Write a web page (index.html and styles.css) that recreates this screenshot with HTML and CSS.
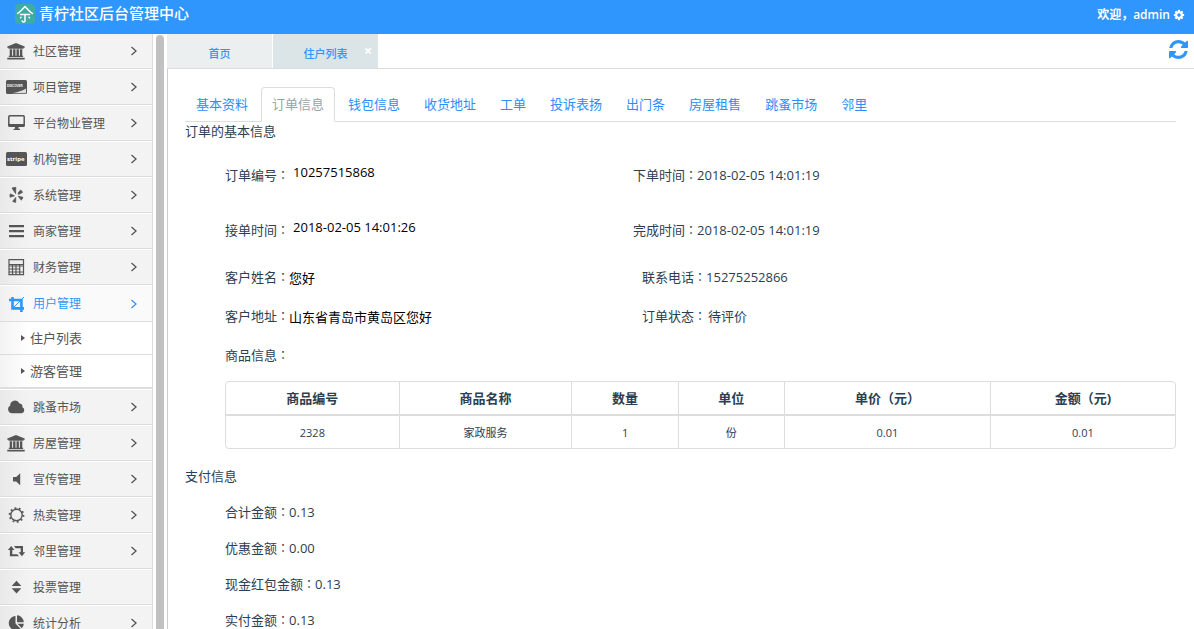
FILE: index.html
```html
<!DOCTYPE html>
<html lang="zh-CN">
<head>
<meta charset="utf-8">
<title>青柠社区后台管理中心</title>
<link rel="stylesheet" href="styles.css">
</head>
<body>
<svg class="defs" aria-hidden="true">
  <symbol id="chevron" viewBox="0 0 8 10"><path d="M1.5 1 6 5 1.5 9" fill="none" stroke="currentColor" stroke-width="1.3"/></symbol>
  <symbol id="caret" viewBox="0 0 4 6"><path d="M0 0 4 3 0 6z" fill="currentColor"/></symbol>
  <symbol id="bank" viewBox="0 0 21 18"><path fill="currentColor" d="M10 1 18.7 4.6v1.2h-1.2v.9h-15v-.9H1.3V4.6zM3.7 7.2h2.4v6.6h1V7.2h2.4v6.6h1V7.2h2.4v6.6h1V7.2h2.4v6.6h.8v1.2H2.8v-1.2h.9zM1.3 15.8h17.4V17.6H1.3z"/></symbol>
</svg>
<header class="topbar">
  <a class="brand" href="#">
    <svg class="logo" viewBox="0 0 20 20"><rect width="20" height="20" rx="4" fill="#3faba6"/><path d="M2.5 9.5C5 8.500 7.500 5 10 2.500c2.500 2.500 5 6 7.500 7M5.500 10.500h9M10 10.500v6.200c0 1.600-2.600 1.800-2.800.2M6 13.200l-.5.5M14 13.200l.5.5" fill="none" stroke="#fff" stroke-width="1.500" stroke-linecap="round" stroke-linejoin="round"/></svg>
    <h1>青柠社区后台管理中心</h1>
  </a>
  <a class="user" href="#">欢迎，admin
    <svg class="cog" viewBox="0 0 1792 1792"><path fill="currentColor" d="M1152 896q0-106-75-181t-181-75-181 75-75 181 75 181 181 75 181-75 75-181zm512-109v222q0 12-8 23t-20 13l-185 28q-19 54-39 91 35 50 107 138 10 12 10 25t-9 23q-27 37-99 108t-94 71q-12 0-26-9l-138-108q-44 23-91 38-16 136-29 186-7 28-36 28h-222q-14 0-24.500-8.500t-11.500-21.500l-28-184q-49-16-90-37l-141 107q-10 9-25 9-14 0-25-11-126-114-165-168-7-10-7-23 0-12 8-23 15-21 51-66.500t54-70.500q-27-50-41-99l-183-27q-13-2-21-12.500t-8-23.500v-222q0-12 8-23t19-13l186-28q14-46 39-92-40-57-107-138-10-12-10-24 0-10 9-23 26-36 98.500-107.500t94.500-71.500q13 0 26 10l138 107q44-23 91-38 16-136 29-186 7-28 36-28h222q14 0 24.500 8.500t11.500 21.500l28 184q49 16 90 37l142-107q9-9 24-9 13 0 25 10 129 119 165 170 7 8 7 22 0 12-8 23-15 21-51 66.500t-54 70.500q26 50 41 98l183 28q13 2 21 12.500t8 23.500z"/></svg>
  </a>
</header>
<div class="frame">
  <nav class="sidebar">
    <a class="item" href="#"><svg class="icon"><use href="#bank"/></svg><span>社区管理</span><svg class="chev"><use href="#chevron"/></svg></a>
    <a class="item" href="#"><svg class="icon" viewBox="0 0 21 18"><rect y="2" width="21" height="14" rx="1.500" fill="currentColor"/><path d="M20 10.500C17 12.500 11 14.500 5.500 15.200H19.500q.5 0 .5-.5z" fill="#ddd"/><text class="tiny" x="1" y="9">DISCOVER</text></svg><span>项目管理</span><svg class="chev"><use href="#chevron"/></svg></a>
    <a class="item" href="#"><svg class="icon" viewBox="0 0 21 18"><rect x="2.800" y="1.800" width="15.400" height="10.400" rx="1" fill="none" stroke="currentColor" stroke-width="1.500"/><path d="M2.500 10h16v2.500h-16zM9 12.500h3.500v2.300H14V16H7.500v-1.200H9z" fill="currentColor"/></svg><span>平台物业管理</span><svg class="chev"><use href="#chevron"/></svg></a>
    <a class="item" href="#"><svg class="icon" viewBox="0 0 21 18"><rect y="2" width="21" height="14" rx="1.500" fill="currentColor"/><text class="stripe" x="1" y="11">stripe</text></svg><span>机构管理</span><svg class="chev"><use href="#chevron"/></svg></a>
    <a class="item" href="#"><svg class="icon" viewBox="0 0 21 18"><path fill="currentColor" stroke="currentColor" stroke-width=".8" stroke-linejoin="round" d="M6 2 9.800 1.300 9.600 7.600zM12 7.200 14.600 3.900 16.600 6.300 12.700 8.400zM12.300 10.300 17 11.300 15.300 14.200zM9.700 11.500V16.400L6.700 15.400zM8.400 9.800 4.200 7.900 4 11.200z"/></svg><span>系统管理</span><svg class="chev"><use href="#chevron"/></svg></a>
    <a class="item" href="#"><svg class="icon" viewBox="0 0 21 18"><path fill="currentColor" d="M3 3h15v2.200H3zM3 8h15v2.200H3zM3 13h15v2.200H3z"/></svg><span>商家管理</span><svg class="chev"><use href="#chevron"/></svg></a>
    <a class="item" href="#"><svg class="icon" viewBox="0 0 21 18"><path fill="none" stroke="currentColor" stroke-width="1.200" d="M3 1.600h14.500v15H3zM3 6.500h14.500M3 8h14.500M3 11h11M3 14h14.500M6.500 7v9.500M10 7v9.500M13.700 7v9.500"/></svg><span>财务管理</span><svg class="chev"><use href="#chevron"/></svg></a>
    <a class="item active" href="#"><svg class="icon" viewBox="0 0 21 18"><path fill="none" stroke="currentColor" stroke-width="2.600" d="M6.500 2v11.400H18M3 5h12.400v12"/><path d="M6.500 13.500 18 2" stroke="currentColor"/></svg><span>用户管理</span><svg class="chev"><use href="#chevron"/></svg></a>
    <div class="submenu">
      <a href="#"><svg class="caret"><use href="#caret"/></svg>住户列表</a>
      <a href="#"><svg class="caret"><use href="#caret"/></svg>游客管理</a>
    </div>
    <a class="item" href="#"><svg class="icon" viewBox="0 0 21 18"><path fill="currentColor" d="M6 15.200a4 4 0 0 1-1.800-7.500 4.800 4.800 0 0 1 9.200-2.200 3 3 0 0 1 3 3.700 3.200 3.200 0 0 1-.5 6z"/></svg><span>跳蚤市场</span><svg class="chev"><use href="#chevron"/></svg></a>
    <a class="item" href="#"><svg class="icon"><use href="#bank"/></svg><span>房屋管理</span><svg class="chev"><use href="#chevron"/></svg></a>
    <a class="item" href="#"><svg class="icon" viewBox="0 0 21 18"><path fill="currentColor" d="M7 7h3.200l4-3.800v12L10.200 11.500H7z"/></svg><span>宣传管理</span><svg class="chev"><use href="#chevron"/></svg></a>
    <a class="item" href="#"><svg class="icon" viewBox="0 0 21 18"><circle cx="10.500" cy="9" r="5.700" fill="none" stroke="currentColor" stroke-width="1.400"/><circle cx="10.500" cy="9" r="7" fill="none" stroke="currentColor" stroke-width="1.700" stroke-dasharray="1.800 2.600"/></svg><span>热卖管理</span><svg class="chev"><use href="#chevron"/></svg></a>
    <a class="item" href="#"><svg class="icon" viewBox="0 0 21 18"><path fill="currentColor" d="M5.200 4 8.500 8H6.300v4.200h5L13 14.300H3.900V8H1.900zM8 4h9v6.200h2.200L15.900 14.300 12.500 10.200h2.200V6.200h-5z"/></svg><span>邻里管理</span><svg class="chev"><use href="#chevron"/></svg></a>
    <a class="item" href="#"><svg class="icon" viewBox="0 0 21 18"><path fill="currentColor" d="M10.500 2.800 15.300 8H5.700zM5.700 10.200h9.600L10.500 15.400z"/></svg><span>投票管理</span></a>
    <a class="item" href="#"><svg class="icon" viewBox="0 0 21 18"><path fill="currentColor" d="M9.500 2v7.500l5 5.300A7.200 7.200 0 1 1 9.500 2zM11 1.300a7 7 0 0 1 6.700 7H11zM11.500 9.700h6.300a7 7 0 0 1-2 4.500z"/></svg><span>统计分析</span><svg class="chev"><use href="#chevron"/></svg></a>
  </nav>
  <div class="scroll"></div>
  <main class="main">
    <div class="pages">
      <a class="page" href="#">首页</a>
      <a class="page current" href="#">住户列表<span class="close">×</span></a>
      <button class="refresh" type="button" aria-label="刷新"><svg viewBox="128 128 1536 1536"><path fill="currentColor" d="M1639 1056q0 5-1 7-64 268-268 434.500t-478 166.500q-146 0-282.500-55t-243.500-157l-129 129q-19 19-45 19t-45-19-19-45v-448q0-26 19-45t45-19h448q26 0 45 19t19 45-19 45l-137 137q71 66 161 102t187 36q134 0 250-65t186-179q11-17 53-117 8-23 30-23h192q13 0 22.500 9.500t9.500 22.500zm25-800v448q0 26-19 45t-45 19h-448q-26 0-45-19t-19-45 19-45l138-138q-148-137-349-137-134 0-250 65t-186 179q-11 17-53 117-8 23-30 23h-199q-13 0-22.500-9.500t-9.500-22.500v-7q65-268 270-434.500t480-166.500q146 0 284 55.500t245 156.500l130-129q19-19 45-19t45 19 19 45z"/></svg></button>
    </div>
    <div class="content">
      <nav class="tabs">
        <a href="#">基本资料</a>
        <a class="selected" href="#">订单信息</a>
        <a href="#">钱包信息</a>
        <a href="#">收货地址</a>
        <a href="#">工单</a>
        <a href="#">投诉表扬</a>
        <a href="#">出门条</a>
        <a href="#">房屋租售</a>
        <a href="#">跳蚤市场</a>
        <a href="#">邻里</a>
      </nav>
      <h2>订单的基本信息</h2>
      <section class="order">
        <div class="row tall">
          <div class="field">订单编号<span class="mid">：</span><span class="value">10257515868</span></div>
          <div class="field">下单时间<span class="mid">：</span>2018-02-05 14:01:19</div>
        </div>
        <div class="row medium">
          <div class="field">接单时间<span class="mid">：</span><span class="value">2018-02-05 14:01:26</span></div>
          <div class="field">完成时间<span class="mid">：</span>2018-02-05 14:01:19</div>
        </div>
        <div class="row shifted">
          <div class="field">客户姓名<span class="mid">：</span><span class="value">您好</span></div>
          <div class="field">联系电话<span class="mid">：</span>15275252866</div>
        </div>
        <div class="row shifted">
          <div class="field">客户地址<span class="mid">：</span><span class="value">山东省青岛市黄岛区您好</span></div>
          <div class="field">订单状态<span class="mid">：</span><span class="state">待评价</span></div>
        </div>
        <div class="field goods-label">商品信息<span class="mid">：</span></div>
        <table class="goods">
          <colgroup><col class="c-id"><col class="c-name"><col class="c-count"><col class="c-unit"><col class="c-price"><col class="c-sum"></colgroup>
          <thead><tr><th>商品编号</th><th>商品名称</th><th>数量</th><th>单位</th><th>单价（元）</th><th>金额（元)</th></tr></thead>
          <tbody><tr><td>2328</td><td>家政服务</td><td>1</td><td>份</td><td>0.01</td><td>0.01</td></tr></tbody>
        </table>
      </section>
      <h2>支付信息</h2>
      <section class="pay">
        <div class="field">合计金额<span class="mid">：</span>0.13</div>
        <div class="field">优惠金额<span class="mid">：</span>0.00</div>
        <div class="field">现金红包金额<span class="mid">：</span>0.13</div>
        <div class="field">实付金额<span class="mid">：</span>0.13</div>
      </section>
    </div>
  </main>
</div>
</body>
</html>
```
FILE: styles.css
```css
* { box-sizing: border-box; }
body {
  margin: 0;
  height: 100vh;
  display: flex;
  flex-direction: column;
  overflow: hidden;
  background: #fff;
  color: #2c3e50;
  font: 13px/20px "Open Sans", "Noto Sans CJK SC", sans-serif;
}
a { color: inherit; text-decoration: none; }
svg { display: block; flex: none; }
.defs { position: absolute; width: 0; height: 0; }
.mid { font-family: "Noto Sans CJK TC", sans-serif; font-size: 12px; }

.topbar {
  flex: none;
  height: 34px;
  display: flex;
  align-items: flex-start;
  justify-content: space-between;
  padding: 4px 9px 0 15px;
  background: #2e96fc;
  color: #fff;
}
.brand { display: flex; align-items: flex-start; gap: 4px; }
.logo { width: 20px; height: 20px; }
h1 { margin: 0; font-size: 15px; font-weight: 500; line-height: 19px; }
.user { display: flex; align-items: center; padding-top: 1px; font-size: 12px; font-weight: 600; }
.cog { width: 12px; height: 12px; margin-left: 3px; }

.frame { flex: 1; min-height: 0; display: flex; }
.sidebar {
  flex: none;
  width: 153px;
  overflow: hidden;
  border-right: 1px solid #ddd;
  background: #f3f3f3;
  color: #555;
}
.item {
  height: 36px;
  display: flex;
  align-items: center;
  gap: 6px;
  padding: 0 14px 0 6px;
  border-top: 1px solid #fff;
  border-bottom: 1px solid #ddd;
  background: linear-gradient(90deg, #e9e9e9, #f3f3f3 30px);
  font-size: 12px;
  line-height: 18px;
}
.item span { padding-top: 1px; }
.item:first-child { height: 35px; border-top: 0; }
.item.active { height: 37px; color: #2e96fc; background: linear-gradient(90deg, #f0f0f0, #fafafa 30px); }
.icon { width: 21px; height: 18px; }
.chev { width: 8px; height: 10px; margin-left: auto; }
.tiny { font: bold 3px "Liberation Sans", sans-serif; fill: #fff; }
.stripe { font: bold 6px "Open Sans", sans-serif; fill: #fff; }
.submenu { border-bottom: 1px solid #ddd; }
.submenu a {
  height: 33px;
  display: flex;
  align-items: center;
  gap: 5px;
  padding-left: 21px;
  border-bottom: 1px solid #ddd;
  background: linear-gradient(90deg, #f3f3f3, #fff 30px);
}
.caret { width: 4px; height: 6px; }
.scroll {
  flex: none;
  width: 8px;
  margin: 1px 3px 0 3px;
  border-radius: 4px 4px 0 0;
  background: #c1c1c1;
}

.main { flex: 1; min-width: 0; display: flex; flex-direction: column; }
.pages {
  flex: none;
  height: 35px;
  display: flex;
  gap: 1px;
  border-bottom: 1px solid #ddd;
}
.page {
  position: relative;
  width: 105px;
  display: flex;
  align-items: center;
  justify-content: center;
  padding-top: 5px;
  background: #ebeff0;
  color: #2e96fc;
  font-size: 11px;
  font-weight: 500;
}
.page.current { background: #dbe4e7; }
.close { position: absolute; top: 7px; right: 6px; color: #fff; font-size: 14px; font-weight: 700; }
.refresh {
  margin-left: auto;
  padding: 0 6px 4px 0;
  border: 0;
  background: none;
  color: #2e96fc;
}
.refresh svg { width: 19px; height: 19px; }

.content { flex: 1; padding: 18px 18px 0 17px; border-left: 1px solid #ccc; }
.tabs { display: flex; gap: 2px; border-bottom: 1px solid #ddd; }
.tabs a {
  height: 35px;
  margin-bottom: -1px;
  padding: 6px 10px;
  border: 1px solid transparent;
  border-radius: 4px 4px 0 0;
  color: #2e8cfc;
}
.tabs .selected { border-color: #ddd #ddd #fff; background: #fff; color: #95a5a6; }
h2 { margin: 0; font-size: 13px; font-weight: 400; line-height: 18px; }
.order { padding: 25px 0 18px 40px; }
.row { display: grid; grid-template-columns: 408px 1fr; height: 39px; }
.row.tall { height: 55px; }
.row.medium { height: 47px; }
.row.shifted { grid-template-columns: 417px 1fr; }
.field { display: flex; align-items: flex-start; white-space: pre; }
.value { margin-left: 4px; line-height: 14px; color: #000; }
.shifted .value { margin-left: 0; line-height: 22px; }
.state { margin-left: 2px; }
.goods-label { height: 36px; }
.goods {
  width: 100%;
  table-layout: fixed;
  border: 1px solid #ddd;
  border-radius: 4px;
  border-collapse: separate;
  border-spacing: 0;
  text-align: center;
}
.goods th, .goods td { padding: 0; border-left: 1px solid #ddd; }
.goods th:first-child, .goods td:first-child { border-left: 0; }
.goods th { height: 34px; border-bottom: 2px solid #ddd; }
.goods td { height: 32px; padding-top: 2px; font-size: 11px; }
.c-id, .c-name { width: 18.2%; }
.c-count, .c-unit { width: 11.2%; }
.c-price { width: 21.7%; }
.c-sum { width: 19.5%; }
.pay { display: flex; flex-direction: column; gap: 16px; padding: 17px 0 0 40px; }
```
